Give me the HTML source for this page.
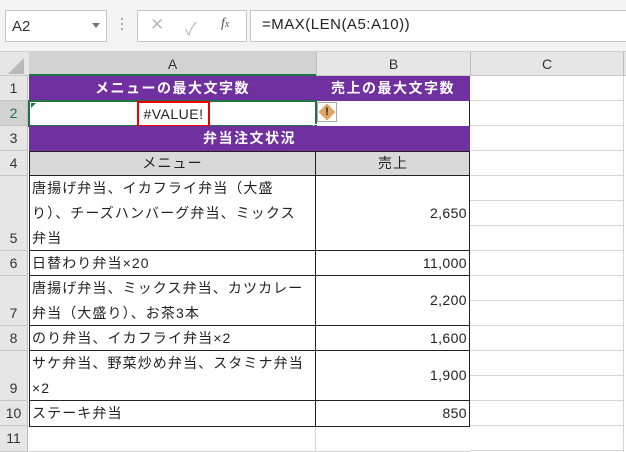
<!DOCTYPE html>
<html><head><meta charset="utf-8"><style>
body{margin:0;width:626px;height:452px;background:#fff;position:relative;overflow:hidden;font-family:"Liberation Sans","Noto Sans CJK JP",sans-serif;}
div{position:absolute;box-sizing:border-box;}
.t{font-size:14px;color:#222;white-space:nowrap;}
.j{letter-spacing:1.1px;}
.rh{left:0;width:28px;background:#e6e6e6;border-bottom:1px solid #c8c8c8;border-right:1px solid #bdbdbd;text-align:center;font-size:14px;color:#333;}
</style></head><body>
<div style="left:0;top:0;width:626px;height:52px;background:#f3f3f3;border-bottom:1px solid #d0d0d0"></div>
<div style="left:5px;top:10px;width:102px;height:32px;background:#fff;border:1px solid #c6c6c6"></div>
<div class="t" style="left:12px;top:18px;font-size:15px;color:#333">A2</div>
<div style="left:92px;top:23px;width:0;height:0;border-left:4px solid transparent;border-right:4px solid transparent;border-top:5px solid #777"></div>
<div style="left:121px;top:18px;width:2px;height:2px;background:#aaa;box-shadow:0 5px #aaa,0 10px #aaa"></div>
<div style="left:137px;top:10px;width:110px;height:32px;background:#fff;border:1px solid #c6c6c6"></div>
<div class="t" style="left:150px;top:15px;font-size:17px;color:#bbb">✕</div>
<div class="t" style="left:185px;top:15px;font-size:17px;color:#bbb">✓</div>
<div class="t" style="left:221px;top:16px;font-size:14px;color:#555;font-style:italic;font-family:'Liberation Serif',serif">f<span style="font-size:10px">x</span></div>
<div style="left:250px;top:10px;width:380px;height:32px;background:#fff;border:1px solid #c6c6c6"></div>
<div class="t" style="left:262px;top:16px;font-size:15px;color:#222;letter-spacing:0.5px">=MAX(LEN(A5:A10))</div>
<div style="left:0;top:52px;width:626px;height:24px;background:#e6e6e6;border-bottom:1px solid #c8c8c8"></div>
<div style="left:8px;top:58px;width:0;height:0;border-left:16px solid transparent;border-bottom:16px solid #b8b8b8"></div>
<div style="left:29px;top:52px;width:287px;height:24px;background:#d2d2d2;border-bottom:2px solid #217346;text-align:center;font-size:14px;color:#333;line-height:24px">A</div>
<div style="left:316px;top:52px;width:154px;height:24px;border-left:1px solid #bdbdbd;text-align:center;font-size:14px;color:#333;line-height:24px">B</div>
<div style="left:470px;top:52px;width:154px;height:24px;border-left:1px solid #bdbdbd;border-right:1px solid #bdbdbd;text-align:center;font-size:14px;color:#333;line-height:24px">C</div>
<div class="rh" style="top:76px;height:25px;line-height:25px">1</div>
<div class="rh" style="top:101px;height:25px;line-height:25px;background:#d2d2d2;color:#217346">2</div>
<div class="rh" style="top:126px;height:25px;line-height:25px">3</div>
<div class="rh" style="top:151px;height:25px;line-height:25px">4</div>
<div class="rh" style="top:176px;height:75px;line-height:25px;padding-top:50px">5</div>
<div class="rh" style="top:251px;height:25px;line-height:25px">6</div>
<div class="rh" style="top:276px;height:50px;line-height:25px;padding-top:25px">7</div>
<div class="rh" style="top:326px;height:25px;line-height:25px">8</div>
<div class="rh" style="top:351px;height:50px;line-height:25px;padding-top:25px">9</div>
<div class="rh" style="top:401px;height:25px;line-height:25px">10</div>
<div class="rh" style="top:426px;height:26px;line-height:25px">11</div>
<div style="left:470px;top:76px;width:154px;height:376px;border-right:1px solid #d4d4d4;background:repeating-linear-gradient(#fff 0 24px,#d4d4d4 24px 25px)"></div>
<div style="left:29px;top:76px;width:441px;height:25px;background:#7030a0"></div>
<div class="t" style="left:29px;top:76px;width:287px;line-height:25px;text-align:center;color:#fff;font-weight:bold;letter-spacing:1.5px">メニューの最大文字数</div>
<div class="t" style="left:316px;top:76px;width:154px;line-height:25px;text-align:center;color:#fff;font-weight:bold;letter-spacing:1.5px">売上の最大文字数</div>
<div style="left:29px;top:101px;width:441px;height:26px;border:1px solid #222;border-top:none"></div>
<div style="left:28px;top:100px;width:289px;height:27px;border:2px solid #217346"></div>
<div style="left:313px;top:124px;width:5px;height:5px;background:#217346;border:1px solid #fff"></div>
<div style="left:31px;top:103px;width:0;height:0;border-right:5px solid transparent;border-top:5px solid #217346"></div>
<div style="left:137px;top:101px;width:73px;height:26px;border:2px solid #e00"></div>
<div class="t" style="left:137px;top:101px;width:73px;line-height:26px;text-align:center;color:#222;letter-spacing:0.5px">#VALUE!</div>
<div style="left:317px;top:102px;width:20px;height:20px;border:1px solid #aaa;background:#fff"></div>
<div style="left:321px;top:106px;width:12px;height:12px;background:#e0a560;transform:rotate(45deg)"></div>
<div class="t" style="left:317px;top:102px;width:20px;line-height:20px;text-align:center;font-size:11px;font-weight:bold;color:#222">!</div>
<div style="left:29px;top:126px;width:441px;height:25px;background:#7030a0"></div>
<div class="t" style="left:29px;top:126px;width:441px;line-height:25px;text-align:center;color:#fff;font-weight:bold;letter-spacing:1.5px">弁当注文状況</div>
<div style="left:29px;top:151px;width:441px;height:25px;background:#d9d9d9"></div>
<div style="left:29px;top:151px;width:441px;height:276px;border:1px solid #222"></div>
<div style="left:315px;top:151px;width:1px;height:276px;background:#222"></div>
<div style="left:29px;top:175px;width:441px;height:1px;background:#222"></div>
<div style="left:29px;top:250px;width:441px;height:1px;background:#222"></div>
<div style="left:29px;top:275px;width:441px;height:1px;background:#222"></div>
<div style="left:29px;top:325px;width:441px;height:1px;background:#222"></div>
<div style="left:29px;top:350px;width:441px;height:1px;background:#222"></div>
<div style="left:29px;top:400px;width:441px;height:1px;background:#222"></div>
<div style="left:315px;top:427px;width:1px;height:25px;background:#d4d4d4"></div>
<div style="left:29px;top:451px;width:441px;height:1px;background:#d4d4d4"></div>
<div class="t j" style="left:29px;top:151px;width:287px;line-height:24px;text-align:center">メニュー</div>
<div class="t j" style="left:316px;top:151px;width:154px;line-height:24px;text-align:center">売上</div>
<div class="t j" style="left:32px;top:176px;line-height:25px">唐揚げ弁当、イカフライ弁当（大盛<br>り）、チーズハンバーグ弁当、ミックス<br>弁当</div>
<div class="t j" style="left:32px;top:251px;line-height:25px">日替わり弁当×20</div>
<div class="t j" style="left:32px;top:276px;line-height:25px">唐揚げ弁当、ミックス弁当、カツカレー<br>弁当（大盛り）、お茶3本</div>
<div class="t j" style="left:32px;top:326px;line-height:25px">のり弁当、イカフライ弁当×2</div>
<div class="t j" style="left:32px;top:351px;line-height:25px">サケ弁当、野菜炒め弁当、スタミナ弁当<br>×2</div>
<div class="t j" style="left:32px;top:401px;line-height:25px">ステーキ弁当</div>
<div class="t" style="left:316px;top:201px;width:151px;line-height:25px;text-align:right;letter-spacing:0.4px">2,650</div>
<div class="t" style="left:316px;top:251px;width:151px;line-height:25px;text-align:right;letter-spacing:0.4px">11,000</div>
<div class="t" style="left:316px;top:288px;width:151px;line-height:25px;text-align:right;letter-spacing:0.4px">2,200</div>
<div class="t" style="left:316px;top:326px;width:151px;line-height:25px;text-align:right;letter-spacing:0.4px">1,600</div>
<div class="t" style="left:316px;top:363px;width:151px;line-height:25px;text-align:right;letter-spacing:0.4px">1,900</div>
<div class="t" style="left:316px;top:401px;width:151px;line-height:25px;text-align:right;letter-spacing:0.4px">850</div>
</body></html>
